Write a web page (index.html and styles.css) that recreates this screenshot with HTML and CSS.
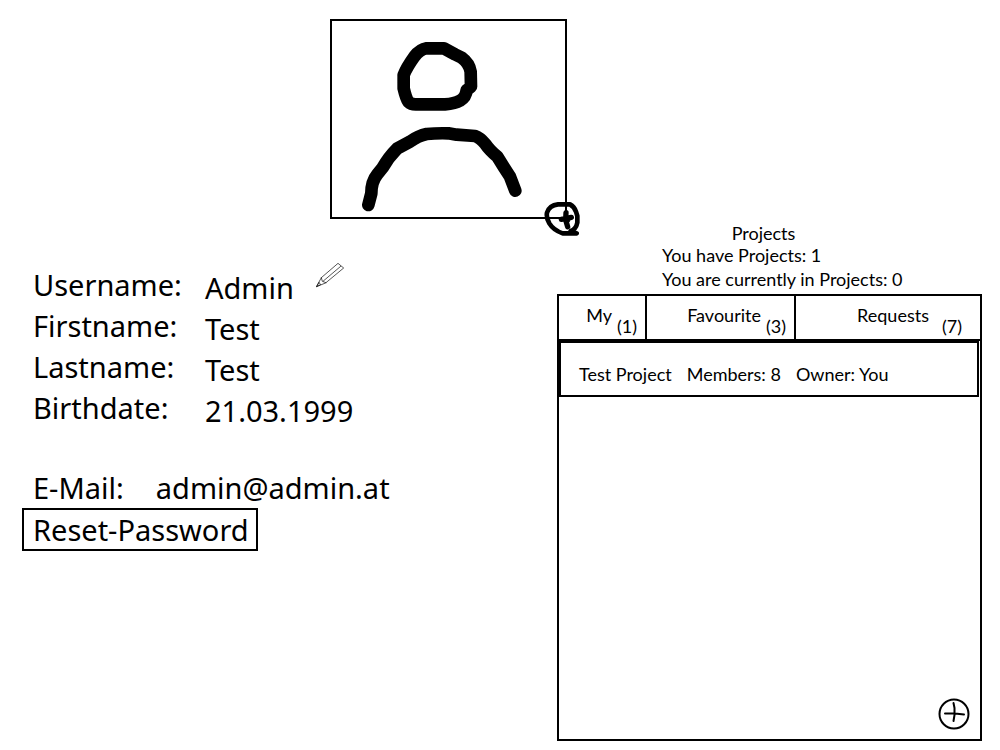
FILE: index.html
```html
<!DOCTYPE html>
<html lang="en">
<head>
<meta charset="utf-8">
<meta name="viewport" content="width=device-width, initial-scale=1">
<title>Profile</title>
<link rel="stylesheet" href="styles.css">
</head>
<body>
<header class="top">
  <div class="avatar">
    <svg class="avatar-figure" viewBox="36 33 699 588" role="img" aria-label="Profile picture">
      <path d="M441 240L453 230L452 185Q448 160 425 143L405 133L372 115H320Q300 118 283 140Q260 172 251 195V235Q258 265 265 275Q273 283 287 283H375Q405 281 420 272Q438 262 440 240"/>
      <path d="M145 585L154 550Q154 515 172 493L188 473Q205 442 231 416L270 395Q295 377 320 372Q350 369 385 370L410 374L465 378Q480 383 496 402Q508 420 532 440L552 472L570 500L586 542"/>
    </svg>
    <button class="icon-button avatar-add" type="button" aria-label="Change picture">
      <svg viewBox="672 573 108 108">
        <path d="M714 583H750Q763 590 768 605L772 618V638Q768 658 752 663L770 670H728Q700 660 688 640Q678 622 681 608Q688 586 714 583"/>
        <path class="cross" d="M724 628L754 622M738 608L737 630L743 650M737 625L743 630"/>
      </svg>
    </button>
  </div>
</header>
<main class="columns">
  <section class="profile">
    <div class="details">
      <dl class="fields">
        <dt>Username:</dt><dd>Admin</dd>
        <dt>Firstname:</dt><dd>Test</dd>
        <dt>Lastname:</dt><dd>Test</dd>
        <dt>Birthdate:</dt><dd>21.03.1999</dd>
      </dl>
      <button class="icon-button edit" type="button" aria-label="Edit username">
        <svg viewBox="48 36 84 78">
          <path d="M50 109L64 83L114 40L131 54L78 98ZM64 83L67 94L78 98M70 93L122 49M50 109L57 97L61 103Z"/>
        </svg>
      </button>
    </div>
    <dl class="mail">
      <dt>E-Mail:</dt><dd>admin@admin.at</dd>
    </dl>
    <button class="reset" type="button">Reset-Password</button>
  </section>
  <section class="projects">
    <h2 class="title">Projects</h2>
    <div class="summary">
      <p>You have Projects: 1</p>
      <p>You are currently in Projects: 0</p>
    </div>
    <div class="panel">
      <div class="tabs" role="tablist">
        <button class="tab" type="button" role="tab" aria-selected="true">My <span class="count">(1)</span></button>
        <button class="tab" type="button" role="tab" aria-selected="false">Favourite <span class="count">(3)</span></button>
        <button class="tab" type="button" role="tab" aria-selected="false">Requests <span class="count">(7)</span></button>
      </div>
      <article class="project">
        <span>Test Project</span><span>Members: 8</span><span>Owner: You</span>
      </article>
      <button class="icon-button add-project" type="button" aria-label="Add project">
        <svg viewBox="0 0 32 32">
          <circle cx="16" cy="16" r="14.5"/>
          <path d="M15.5 5L16.5 10V17L15.5 23M7 15.5H17L26 16.5"/>
        </svg>
      </button>
    </div>
  </section>
</main>
</body>
</html>
```
FILE: styles.css
```css
* { box-sizing: border-box; }
body {
  margin: 0;
  min-height: 100vh;
  display: flex;
  flex-direction: column;
  background: #fff;
  color: #000;
  font: 18px/24px Lato, "Open Sans", sans-serif;
}
button { font: inherit; color: inherit; background: none; border: 0; padding: 0; cursor: pointer; }
svg { display: block; width: 100%; fill: none; stroke: #000; stroke-linecap: round; stroke-linejoin: round; }
dl, dd, h2, p { margin: 0; }
.top { display: flex; justify-content: center; padding: 19px 103px 0 0; }
.avatar { position: relative; width: 237px; border: 2px solid #000; }
.avatar-figure { stroke-width: 38px; }
.avatar-add { position: absolute; right: -15px; bottom: -20px; width: 36px; }
.avatar-add svg { stroke-width: 14px; }
.avatar-add .cross { stroke-width: 16px; }
.columns {
  flex: 1;
  display: grid;
  grid-template-columns: minmax(0, 1fr) minmax(0, 425px);
  padding: 0 18px 9px 22px;
}
.profile { padding-top: 45px; font: 29px/41px "Noto Sans", "Open Sans", sans-serif; }
.details { display: flex; align-items: flex-start; }
.fields { display: grid; grid-template-columns: 172px 111px; padding-left: 11px; white-space: nowrap; }
.fields dd { padding-top: 3px; margin-bottom: -3px; }
.edit { width: 28px; margin-top: -2px; }
.edit svg { stroke-width: 2px; }
.mail { display: flex; gap: 32px; padding: 39px 0 0 11px; }
.reset { padding: 0 7px 0 9px; border: 2px solid #000; line-height: 39px; }
.projects { display: flex; flex-direction: column; padding-top: 3px; }
.title { font: inherit; text-align: center; padding-right: 12px; line-height: 22px; }
.summary { margin-top: -1px; padding: 0 0 3px 105px; }
.panel { flex: 1; display: flex; flex-direction: column; border: 2px solid #000; }
.tabs { display: grid; grid-template-columns: 88fr 149fr 184fr; border-bottom: 2px solid #000; }
.tab { display: flex; justify-content: flex-end; gap: 5px; height: 43px; padding: 7px 8px 0 0; border-right: 2px solid #000; }
.tab:last-child { gap: 13px; padding-right: 18px; border-right: 0; }
.count { padding-top: 11px; }
.project { display: flex; gap: 15px; margin-right: 1px; padding: 19px 18px 9px; border: 2px solid #000; }
.add-project { width: 32px; margin: auto 10px 9px auto; }
.add-project svg { stroke-width: 2px; }
```
